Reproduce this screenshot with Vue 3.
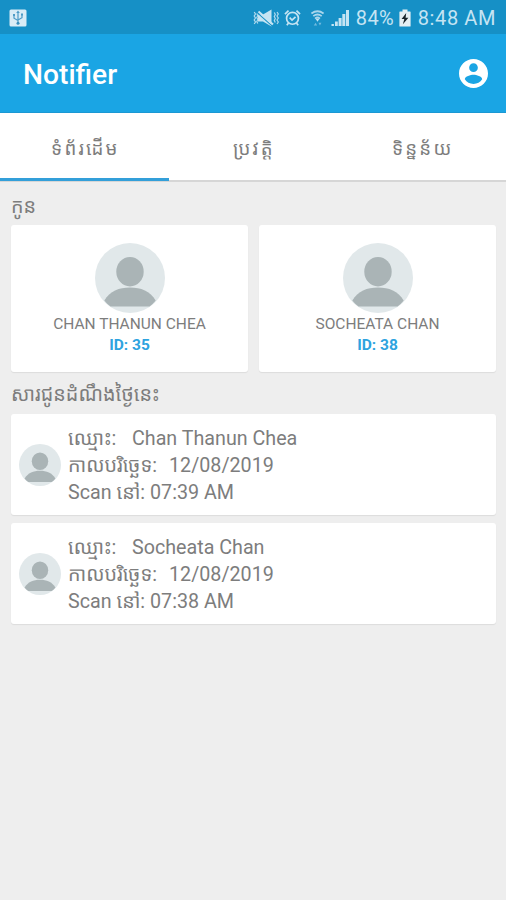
<template>
  <div class="screen">
    <div class="status_bar">
      <svg class="usb" viewBox="0 0 18 18">
        <rect x="0.5" y="0.5" width="17" height="17" rx="1.5" fill="#d9ecf6" />
        <g fill="none" stroke="#4d9bc6" stroke-width="1.2">
          <path d="M9 3v11M5 6v3.2l4 2.3M13 5.5v3.2l-4 2.3" />
        </g>
        <path d="M9 1.5l1.8 2.6H7.2zM4 5h2v2H4zM12 4.5h2v2h-2z" fill="#4d9bc6" />
        <circle cx="9" cy="14.3" r="1.5" fill="#3a8fbd" />
      </svg>
      <div class="status_right">
        <svg class="mute" viewBox="0 0 26 18">
          <path d="M5 5.5h5l8.5-5v17L10 12.5H5z" fill="#c5e4f3" />
          <path d="M4.5 3.8l14.5 13" stroke="#1690c6" stroke-width="1.1" />
          <path d="M5.5 2.5l14.5 13" stroke="#c5e4f3" stroke-width="2" />
          <path d="M1.2 3l1.3 2-1.3 2 1.3 2-1.3 2 1.3 2-1.3 2M3.8 4.5l1 2-1 2 1 2-1 2 1 2M21.3 3.5l1 2-1 2 1 2-1 2 1 2M24 3l1.3 2L24 7l1.3 2L24 11l1.3 2-1.3 2" fill="none" stroke="#b2dbee" stroke-width="1.2" />
        </svg>
        <svg class="alarm" viewBox="0 0 18 18">
          <g fill="none" stroke="#c5e4f3" stroke-width="1.8">
            <circle cx="9" cy="9.3" r="6.3" />
            <path d="M1 5l3.8-3.8M17 5l-3.8-3.8M4.8 14.2L3 16.7M13.2 14.2l1.8 2.5M6 8.7l2.5 2.5 3.7-3.5" />
          </g>
        </svg>
        <svg class="wifi" viewBox="0 0 16 18">
          <g fill="none" stroke="#a9d6ec" stroke-width="1.9">
            <path d="M1.5 4.1q6.5-4.6 13 0M3.5 7q4.5-3.4 9 0M5.4 9.6q2.6-2.2 5.2 0" />
          </g>
          <path d="M6 9.8h4L8 13z" fill="#c5e4f3" />
          <path d="M4 17l2-3 1.6 3zM9 14h3.2l-1.6 3z" fill="#71bbdf" />
        </svg>
        <svg class="signal" viewBox="0 0 18 18">
          <path d="M0.5 15h2.4v2H.5zM4 12.5h2.8V17H4zM7.6 9h3v8h-3zM11.3 5h3v12h-3zM15 1h3v16h-3z" fill="#c5e4f3" />
        </svg>
        <span class="percent">84%</span>
        <svg class="battery" viewBox="0 0 12 18">
          <path d="M3.5 0.5h5v2H11a.6.6 0 0 1 .6.6v13.8a.6.6 0 0 1-.6.6H1a.6.6 0 0 1-.6-.6V3.1a.6.6 0 0 1 .6-.6h2.5z" fill="#e4eff3" />
          <path d="M7.2 4L2.6 10h2.7l-1.4 5.2L9.4 8.7H6.6z" fill="#17242a" />
        </svg>
        <span class="clock">8:48 AM</span>
      </div>
    </div>

    <header class="app_bar">
      <h1>Notifier</h1>
      <svg class="account" viewBox="2 2 20 20">
        <path fill="#fff" d="M12 2C6.48 2 2 6.48 2 12s4.48 10 10 10 10-4.48 10-10S17.52 2 12 2zm0 3c1.66 0 3 1.34 3 3s-1.34 3-3 3-3-1.34-3-3 1.34-3 3-3zm0 14.2c-2.5 0-4.71-1.28-6-3.22.03-1.99 4-3.08 6-3.08 1.99 0 5.97 1.09 6 3.08-1.29 1.94-3.5 3.22-6 3.22z" />
      </svg>
    </header>

    <nav class="tabs">
      <div v-for="(tab, i) in tabs" :key="tab" class="tab" :class="{ active: i === activeTab }" @click="activeTab = i">
        {{ tab }}
      </div>
    </nav>

    <h2 class="label">កូន</h2>
    <div class="children">
      <div v-for="child in children" :key="child.id" class="child">
        <svg class="avatar" viewBox="0 0 70 70">
          <circle cx="35" cy="35" r="35" fill="#e1e8ea" />
          <ellipse cx="35" cy="28.7" rx="13.7" ry="14.7" fill="#aab4b6" />
          <path d="M9.3 57.5C15 48 24 44.5 35 44.5S55 48 60.7 57.5Q58 61 54.5 63.5H15.5Q12 61 9.3 57.5Z" fill="#aab4b6" />
        </svg>
        <div class="child_name">{{ child.name.toUpperCase() }}</div>
        <div class="child_id">ID: {{ child.id }}</div>
      </div>
    </div>

    <h2 class="label today">សារជូនដំណឹងថ្ងៃនេះ</h2>
    <div class="messages">
      <div v-for="msg in messages" :key="msg.name" class="message">
        <svg class="avatar" viewBox="0 0 70 70">
          <circle cx="35" cy="35" r="35" fill="#e1e8ea" />
          <ellipse cx="35" cy="28.7" rx="13.7" ry="14.7" fill="#aab4b6" />
          <path d="M9.3 57.5C15 48 24 44.5 35 44.5S55 48 60.7 57.5Q58 61 54.5 63.5H15.5Q12 61 9.3 57.5Z" fill="#aab4b6" />
        </svg>
        <div class="message_text">
          <div class="row"><span class="name_key">ឈ្មោះ:</span><span>{{ msg.name }}</span></div>
          <div class="row"><span class="date_key">កាលបរិច្ឆេទ:</span><span>{{ msg.date }}</span></div>
          <div class="row"><span class="scan_key">Scan នៅ:</span><span>{{ msg.time }}</span></div>
        </div>
      </div>
    </div>
  </div>
</template>

<script setup>
import { ref } from "vue";

const tabs = ["ទំព័រដើម", "ប្រវត្តិ", "ទិន្នន័យ"];
const activeTab = ref(0);

const children = [
  { id: 35, name: "Chan Thanun Chea" },
  { id: 38, name: "Socheata Chan" },
];

// today's scans
const messages = [
  { name: "Chan Thanun Chea", date: "12/08/2019", time: "07:39 AM" },
  { name: "Socheata Chan", date: "12/08/2019", time: "07:38 AM" },
];
</script>

<style>
body {
  background: #eeeeee;
}
</style>

<style scoped>
.screen {
  min-height: 900px;
  background: #eeeeee;
  color: #7d7d7d;
  font-family: Roboto, "Noto Sans Khmer", "Noto Sans", sans-serif;
}

.status_bar {
  height: 34px;
  box-sizing: border-box;
  padding: 2px 11px 0 9px;
  display: flex;
  align-items: center;
  justify-content: space-between;
  background: #1690c6;
  color: #c5e4f3;
  font-size: 20px;
}
.usb {
  width: 18px;
  height: 18px;
}
.status_right {
  display: flex;
  align-items: center;
}
.mute {
  width: 26px;
  height: 18px;
  margin-right: 5px;
}
.alarm {
  width: 17px;
  height: 18px;
  margin-right: 9px;
}
.wifi {
  width: 15px;
  height: 18px;
  margin-right: 6px;
}
.signal {
  width: 18px;
  height: 18px;
  margin-right: 7px;
}
.percent {
  width: 39px;
  letter-spacing: 0.4px;
  white-space: nowrap;
}
.battery {
  width: 12px;
  height: 18px;
  margin: 0 7px 0 4px;
}
.clock {
  letter-spacing: 0.6px;
  margin-right: -1px;
  white-space: nowrap;
}

.app_bar {
  height: 79px;
  box-sizing: border-box;
  padding: 0 18px 0 23px;
  display: flex;
  align-items: center;
  justify-content: space-between;
  background: #1aa5e4;
  border-bottom: 1px solid #1b98d3;
}
.app_bar h1 {
  margin: 3px 0 0;
  color: #fff;
  font-size: 28.2px;
  font-weight: 500;
}
.account {
  width: 29px;
  height: 29px;
}

.tabs {
  height: 69px;
  box-sizing: border-box;
  display: flex;
  background: #fff;
  border-bottom: 2px solid #d6d6d6;
}
.tab {
  flex: 1;
  height: 68px;
  box-sizing: border-box;
  padding-left: 2px;
  border-bottom: 3px solid transparent;
  text-align: center;
  line-height: 73px;
  font-size: 18.7px;
  letter-spacing: 2.2px;
}
.tab.active {
  border-bottom-color: #339fd9;
}

.label {
  margin: 0;
  height: 43px;
  padding: 0 11px;
  line-height: 49px;
  font-size: 19.8px;
  font-weight: 400;
}
.label.today {
  height: 42px;
  line-height: 46px;
}

.children {
  display: flex;
  gap: 11px;
  padding: 0 10px 0 11px;
}
.child {
  flex: 1;
  height: 147px;
  box-sizing: border-box;
  padding-top: 18px;
  display: flex;
  flex-direction: column;
  align-items: center;
  background: #fff;
  border-radius: 3px;
  box-shadow: 0 1px 1px #dcdcdc;
}
.child .avatar {
  width: 70px;
  height: 70px;
}
.child_name {
  line-height: 22px;
  font-size: 15.5px;
}
.child_id {
  line-height: 20px;
  font-size: 15.5px;
  font-weight: 700;
  color: #2da3df;
}

.messages {
  display: flex;
  flex-direction: column;
  gap: 8px;
  padding: 0 10px 0 11px;
}
.message {
  height: 101px;
  box-sizing: border-box;
  padding-left: 8px;
  display: flex;
  align-items: center;
  background: #fff;
  border-radius: 3px;
  box-shadow: 0 1px 1px #dcdcdc;
}
.message .avatar {
  width: 42px;
  height: 42px;
  margin-right: 7px;
}
.message_text {
  padding-top: 2px;
}
.row {
  display: flex;
  height: 27px;
  line-height: 27px;
  font-size: 19.7px;
  white-space: nowrap;
}
.name_key {
  width: 64px;
}
.date_key {
  width: 101px;
}
.scan_key {
  width: 82px;
}
</style>
